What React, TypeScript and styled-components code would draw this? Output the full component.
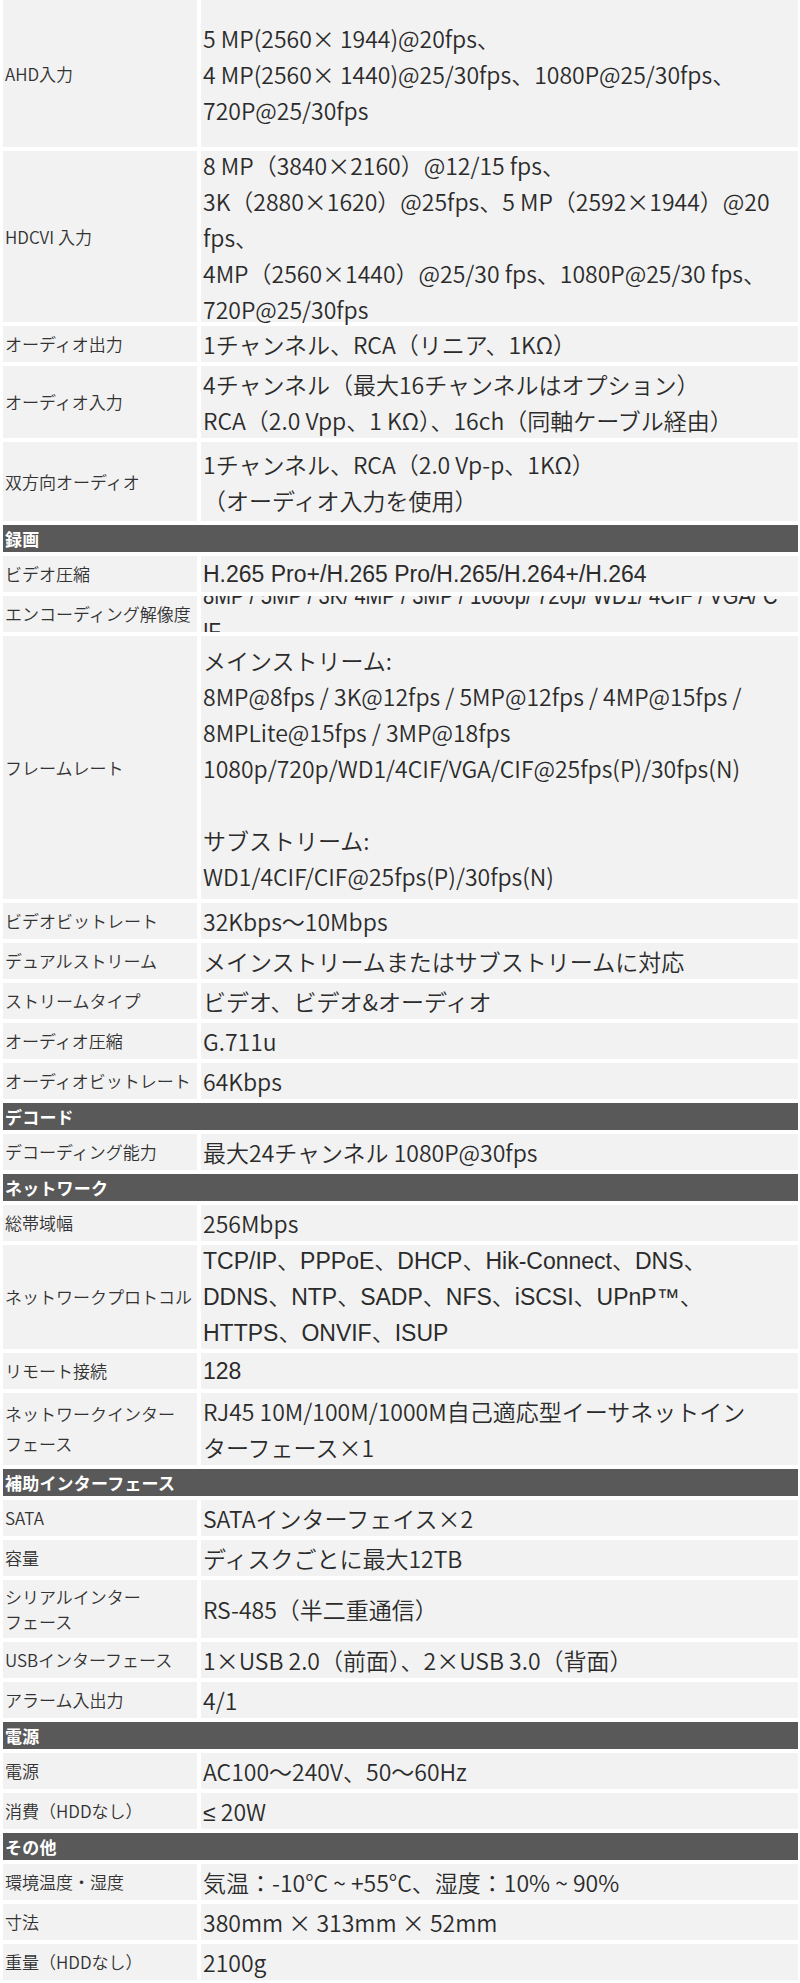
import React from 'react';
import styled, { createGlobalStyle } from 'styled-components';

const GlobalStyle = createGlobalStyle`
  html, body {
    margin: 0;
    padding: 0;
    background: #ffffff;
  }
  body {
    font-family: "Noto Sans CJK JP", "Noto Sans", sans-serif;
    color: #333333;
  }
`;

const JP = '"Noto Sans CJK JP", "Noto Sans", sans-serif';
const ARIAL = '"Liberation Sans", "Noto Sans CJK JP", sans-serif';

const Sheet = styled.div`
  display: grid;
  grid-template-columns: 194px 1fr;
  gap: 4px;
  padding: 0 2px 3px 3px;
  width: 800px;
  box-sizing: border-box;
`;

const SectionHead = styled.div`
  grid-column: 1 / -1;
  height: 27px;
  display: flex;
  align-items: center;
  padding-left: 2px;
  background: #595959;
  color: #ffffff;
  font-size: 17px;
  font-weight: 700;
  letter-spacing: 0.2px;
`;

const Label = styled.div<{ $h: number; $lh: number }>`
  height: ${(p) => p.$h}px;
  display: flex;
  align-items: center;
  padding: 0 2px;
  background: #f2f2f2;
  font-size: 17px;
  font-weight: 350;
  line-height: ${(p) => p.$lh}px;
  color: #333333;
  overflow: hidden;
`;

const Value = styled.div<{ $h: number; $font: string; $clip?: boolean }>`
  height: ${(p) => p.$h}px;
  display: flex;
  flex-direction: column;
  justify-content: center;
  padding: 0 2px;
  background: #f2f2f2;
  font-family: ${(p) => p.$font};
  font-size: 23px;
  font-weight: 350;
  line-height: 36px;
  color: #2b2b2b;
  overflow: ${(p) => (p.$clip ? 'hidden' : 'visible')};
`;

const Line = styled.div`
  min-height: 36px;
  white-space: nowrap;
`;

// narrow math sign, the CJK face draws it full width
const Sign = styled.span`
  font-family: "Liberation Sans", sans-serif;
`;

// condensed face stand-in for the clipped resolution row
const NarrowLine = styled.div`
  white-space: nowrap;
  font-family: "Liberation Sans", sans-serif;
  transform: scaleX(0.875);
  transform-origin: left center;
`;

type Spec =
  | { head: string }
  | { label: string[]; lines: React.ReactNode[]; h: number; font?: string; lh?: number; narrow?: boolean };

const rows: Spec[] = [
  {
    label: ['AHD入力'],
    h: 147,
    lines: [
      '5 MP(2560× 1944)@20fps、',
      '4 MP(2560× 1440)@25/30fps、1080P@25/30fps、',
      '720P@25/30fps',
    ],
  },
  {
    label: ['HDCVI 入力'],
    h: 171,
    lines: [
      '8 MP（3840×2160）@12/15 fps、',
      '3K（2880×1620）@25fps、5 MP（2592×1944）@20',
      'fps、',
      '4MP（2560×1440）@25/30 fps、1080P@25/30 fps、',
      '720P@25/30fps',
    ],
  },
  { label: ['オーディオ出力'], h: 36, lines: ['1チャンネル、RCA（リニア、1KΩ）'] },
  {
    label: ['オーディオ入力'],
    h: 72,
    lines: ['4チャンネル（最大16チャンネルはオプション）', 'RCA（2.0 Vpp、1 KΩ）、16ch（同軸ケーブル経由）'],
  },
  {
    label: ['双方向オーディオ'],
    h: 79,
    lines: ['1チャンネル、RCA（2.0 Vp-p、1KΩ）', '（オーディオ入力を使用）'],
  },
  { head: '録画' },
  { label: ['ビデオ圧縮'], h: 36, font: ARIAL, lines: ['H.265 Pro+/H.265 Pro/H.265/H.264+/H.264'] },
  {
    label: ['エンコーディング解像度'],
    h: 36,
    narrow: true,
    lines: ['8MP / 5MP / 3K/ 4MP / 3MP / 1080p/ 720p/ WD1/ 4CIF / VGA/ C', 'IF'],
  },
  {
    label: ['フレームレート'],
    h: 263,
    lines: [
      'メインストリーム:',
      '8MP@8fps / 3K@12fps / 5MP@12fps / 4MP@15fps /',
      '8MPLite@15fps / 3MP@18fps',
      '1080p/720p/WD1/4CIF/VGA/CIF@25fps(P)/30fps(N)',
      '',
      'サブストリーム:',
      'WD1/4CIF/CIF@25fps(P)/30fps(N)',
    ],
  },
  { label: ['ビデオビットレート'], h: 36, lines: ['32Kbps～10Mbps'] },
  { label: ['デュアルストリーム'], h: 36, lines: ['メインストリームまたはサブストリームに対応'] },
  { label: ['ストリームタイプ'], h: 36, lines: ['ビデオ、ビデオ&オーディオ'] },
  { label: ['オーディオ圧縮'], h: 36, lines: ['G.711u'] },
  { label: ['オーディオビットレート'], h: 36, lines: ['64Kbps'] },
  { head: 'デコード' },
  { label: ['デコーディング能力'], h: 36, lines: ['最大24チャンネル 1080P@30fps'] },
  { head: 'ネットワーク' },
  { label: ['総帯域幅'], h: 36, lines: ['256Mbps'] },
  {
    label: ['ネットワークプロトコル'],
    h: 104,
    font: ARIAL,
    lines: [
      'TCP/IP、PPPoE、DHCP、Hik-Connect、DNS、',
      'DDNS、NTP、SADP、NFS、iSCSI、UPnP™、',
      'HTTPS、ONVIF、ISUP',
    ],
  },
  { label: ['リモート接続'], h: 36, font: ARIAL, lines: ['128'] },
  {
    label: ['ネットワークインター', 'フェース'],
    h: 72,
    lh: 30,
    lines: ['RJ45 10M/100M/1000M自己適応型イーサネットイン', 'ターフェース×1'],
  },
  { head: '補助インターフェース' },
  { label: ['SATA'], h: 36, lines: ['SATAインターフェイス×2'] },
  { label: ['容量'], h: 36, lines: ['ディスクごとに最大12TB'] },
  { label: ['シリアルインター', 'フェース'], h: 58, lh: 25, lines: ['RS-485（半二重通信）'] },
  { label: ['USBインターフェース'], h: 36, lines: ['1×USB 2.0（前面）、2×USB 3.0（背面）'] },
  { label: ['アラーム入出力'], h: 36, lines: ['4/1'] },
  { head: '電源' },
  { label: ['電源'], h: 36, lines: ['AC100～240V、50～60Hz'] },
  {
    label: ['消費（HDDなし）'],
    h: 36,
    lines: [
      <>
        <Sign>≤</Sign> 20W
      </>,
    ],
  },
  { head: 'その他' },
  { label: ['環境温度・湿度'], h: 36, lines: ['気温：-10°C ~ +55°C、湿度：10% ~ 90%'] },
  { label: ['寸法'], h: 36, lines: ['380mm × 313mm × 52mm'] },
  { label: ['重量（HDDなし）'], h: 36, lines: ['2100g'] },
];

function SpecRow({ spec }: { spec: Spec }) {
  if ('head' in spec) {
    return <SectionHead>{spec.head}</SectionHead>;
  }
  return (
    <>
      <Label $h={spec.h} $lh={spec.lh ?? 28}>
        <div>
          {spec.label.map((t, i) => (
            <React.Fragment key={i}>
              {i > 0 && <br />}
              {t}
            </React.Fragment>
          ))}
        </div>
      </Label>
      <Value $h={spec.h} $font={spec.font ?? JP} $clip={spec.narrow}>
        {spec.lines.map((t, i) =>
          spec.narrow ? <NarrowLine key={i}>{t}</NarrowLine> : <Line key={i}>{t}</Line>
        )}
      </Value>
    </>
  );
}

export default function App() {
  return (
    <>
      <GlobalStyle />
      <Sheet>
        {rows.map((r, i) => (
          <SpecRow key={i} spec={r} />
        ))}
      </Sheet>
    </>
  );
}
